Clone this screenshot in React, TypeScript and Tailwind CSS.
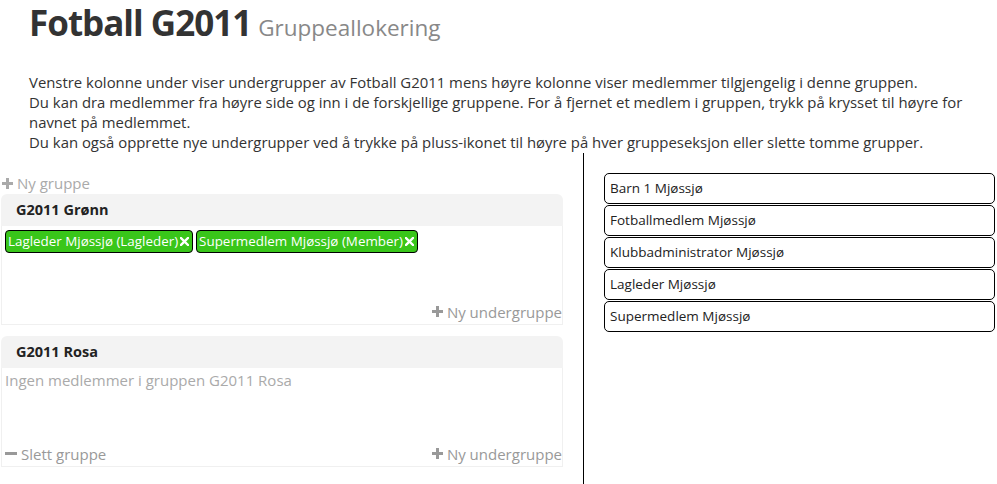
const members = [
  "Barn 1 Mjøssjø",
  "Fotballmedlem Mjøssjø",
  "Klubbadministrator Mjøssjø",
  "Lagleder Mjøssjø",
  "Supermedlem Mjøssjø",
];

function Plus() {
  return (
    <svg width="11" height="11" viewBox="0 0 11 11" className="inline-block">
      <path d="M4 0h3v4h4v3H7v4H4V7H0V4h4z" fill="currentColor" />
    </svg>
  );
}

function Minus() {
  return (
    <svg width="12" height="11" viewBox="0 0 12 11" className="inline-block">
      <rect x="0" y="4" width="12" height="3" fill="currentColor" />
    </svg>
  );
}

function Cross() {
  return (
    <svg width="9" height="9" viewBox="0 0 9 9" className="inline-block">
      <path d="M1 1l7 7M8 1L1 8" stroke="currentColor" strokeWidth="2.4" strokeLinecap="square" />
    </svg>
  );
}

function Chip({ label }: { label: string }) {
  return (
    <span className="flex h-[23px] items-center gap-[2px] rounded-[4px] border border-black bg-[#39c61a] pl-[2px] pr-[3px] text-[13.4px] text-white">
      {label}
      <Cross />
    </span>
  );
}

function Group({
  name,
  chips,
  empty,
  canDelete,
}: {
  name: string;
  chips: string[];
  empty?: string;
  canDelete?: boolean;
}) {
  return (
    <div className="ml-px w-[562px] rounded-t-[6px]">
      <div className="flex h-[32px] items-center rounded-t-[6px] bg-[#f3f3f3] pl-[15px] text-[14.5px] font-bold text-[#222]">
        {name}
      </div>
      <div className="flex h-[99px] flex-col border border-t-0 border-[#f0f0f0]">
        {chips.length > 0 ? (
          <div className="flex gap-[3px] pl-[3px] pt-[4px]">
            {chips.map((c) => (
              <Chip key={c} label={c} />
            ))}
          </div>
        ) : (
          <div className="pl-[3px] pt-[1px] text-[15px] text-[#aaa]">{empty}</div>
        )}
        <div className="mt-auto flex items-center justify-between pb-[1px] text-[15px] text-[#999]">
          <span className="flex items-center gap-[4px] pl-[3px]">
            {canDelete && (
              <>
                <Minus />
                Slett gruppe
              </>
            )}
          </span>
          <span className="flex items-center gap-[4px]">
            <Plus />
            Ny undergruppe
          </span>
        </div>
      </div>
    </div>
  );
}

export default function App() {
  return (
    <div className="h-[484px] w-[997px] overflow-hidden bg-white font-['Open_Sans',sans-serif] text-[#333]">
      {/* header */}
      <div className="flex items-baseline gap-[7px] px-[29px] pt-[3px]">
        <h1 className="text-[35px] font-bold leading-[40px] tracking-[-1px] text-[#333]">Fotball G2011</h1>
        <span className="text-[22.5px] leading-[40px] text-[#888]">Gruppeallokering</span>
      </div>

      <div className="mt-[24px] pl-[29px] pr-[24px] text-[14.9px] leading-[20px] text-[#333]">
        <p>
          Venstre kolonne under viser undergrupper av Fotball G2011 mens høyre kolonne viser medlemmer
          tilgjengelig i denne gruppen.
        </p>
        <p>
          Du kan dra medlemmer fra høyre side og inn i de forskjellige gruppene. For å fjernet et medlem i
          gruppen, trykk på krysset til høyre for navnet på medlemmet.
        </p>
        <p>
          Du kan også opprette nye undergrupper ved å trykke på pluss-ikonet til høyre på hver gruppeseksjon
          eller slette tomme grupper.
        </p>
      </div>

      <div className="mt-px flex">
        {/* left column */}
        <div className="w-[583px] pt-[20px]">
          <div className="flex items-center gap-[4px] pl-[2px] text-[15px] leading-[20px] text-[#aaa]">
            <Plus />
            Ny gruppe
          </div>
          <div className="mt-[1px] flex flex-col gap-[11px]">
            <Group
              name="G2011 Grønn"
              chips={["Lagleder Mjøssjø (Lagleder)", "Supermedlem Mjøssjø (Member)"]}
            />
            <Group name="G2011 Rosa" chips={[]} empty="Ingen medlemmer i gruppen G2011 Rosa" canDelete />
          </div>
        </div>

        {/* right column */}
        <div className="h-[340px] flex-1 border-l border-black pl-[20px] pr-[2px] pt-[20px]">
          <div className="flex flex-col gap-px">
            {members.map((m) => (
              <div
                key={m}
                className="flex h-[31px] items-center rounded-[5px] border border-black pl-[5px] text-[13.5px] text-[#222]"
              >
                {m}
              </div>
            ))}
          </div>
        </div>
      </div>
    </div>
  );
}
